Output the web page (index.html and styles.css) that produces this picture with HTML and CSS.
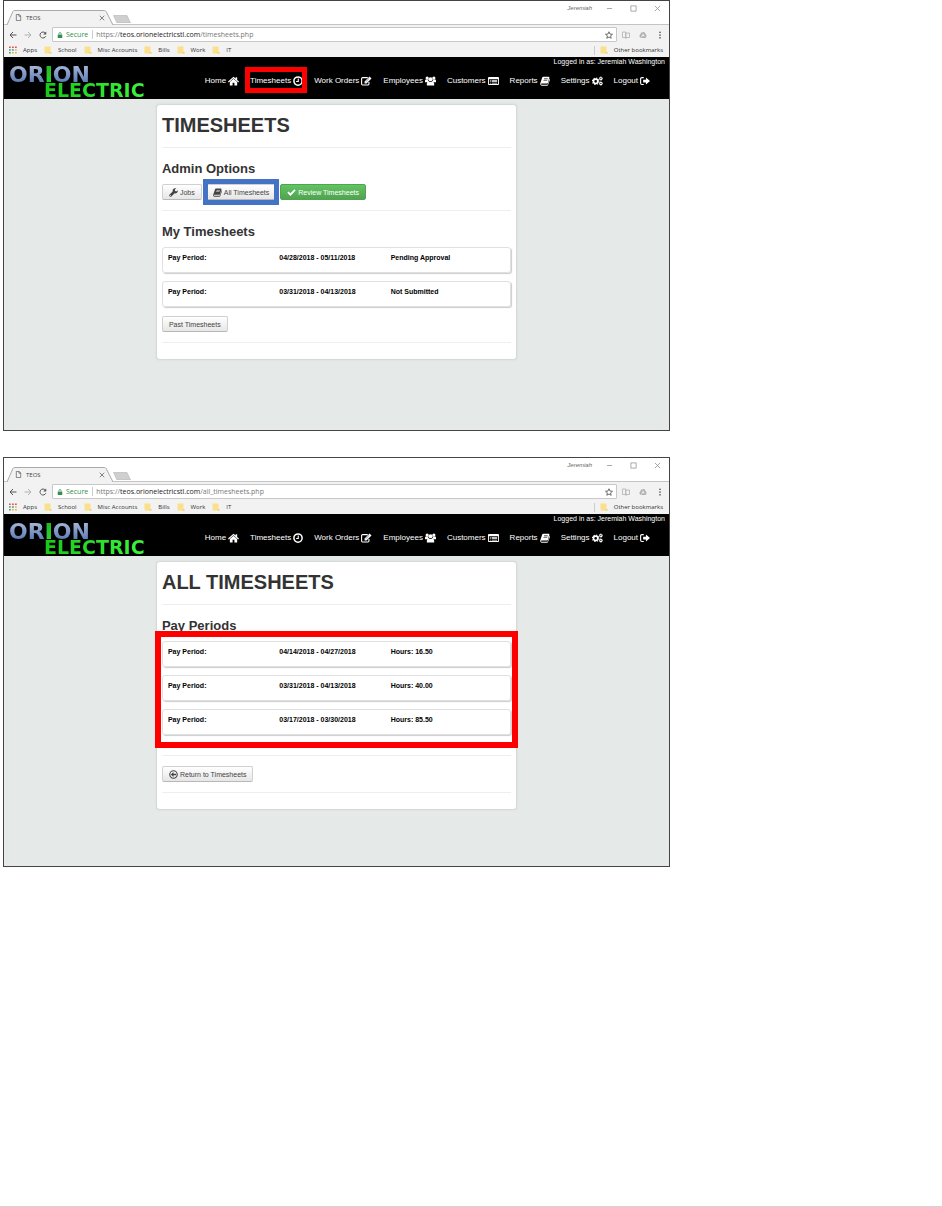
FILE: index.html
```html
<!DOCTYPE html>
<html lang="en">
<head>
<meta charset="utf-8">
<meta name="viewport" content="width=device-width, initial-scale=1">
<title>TEOS Timesheets</title>
<link rel="stylesheet" href="styles.css">
</head>
<body>
<svg class="sprite" aria-hidden="true">
  <symbol id="i-home" viewBox="0 0 18 16"><path d="M9 1 0 9l1.300 1.300L9 3.500l7.700 6.800L18 9l-3-2.700V2h-2.500v2z"/><path d="M9 4.300 3 9.600v5.900h4.500V11h3v4.500H15V9.600z"/></symbol>
  <symbol id="i-clock" viewBox="0 0 16 16"><circle cx="8" cy="8" r="6.600" fill="none" stroke="currentColor" stroke-width="2.400"/><path d="M7.500 4h1.800v5.500H5V7.800h2.500z"/></symbol>
  <symbol id="i-edit" viewBox="0 0 18 16"><path d="M13 9.500V13a1.500 1.500 0 0 1-1.500 1.500h-9A1.500 1.500 0 0 1 1 13V4a1.500 1.500 0 0 1 1.500-1.500H11" fill="none" stroke="currentColor" stroke-width="1.800"/><path d="M14 .8 17.200 4 9 12.200H5.800V9z"/><path d="m7.500 9.500 6-6" stroke="#000" stroke-width=".7"/></symbol>
  <symbol id="i-users" viewBox="0 0 18 16"><circle cx="3.500" cy="3.200" r="2.600"/><circle cx="14.500" cy="3.200" r="2.600"/><circle cx="9" cy="5.200" r="3.400"/><path d="M0 10V7.500Q0 5.500 1.500 5.500h3Q5 8 6.500 8.600L4 10zM18 10V7.500q0-2-1.500-2h-3Q13 8 11.500 8.600L14 10zM3 15.500V12Q3.500 9 6 8.800q3 1.500 6 0 2.500.2 3 3.200v3.500z"/></symbol>
  <symbol id="i-list" viewBox="0 0 18 16"><path fill-rule="evenodd" d="M1.500 1.500h15Q18 1.500 18 3v10q0 1.500-1.500 1.500h-15Q0 14.500 0 13V3q0-1.500 1.500-1.500zM1.500 5v8h15V5zM3 6.200h1.500v1.300H3zm3 0h9v1.300H6zM3 8.500h1.500v1.300H3zm3 0h9v1.300H6zm-3 2.300h1.500v1.300H3zm3 0h9v1.300H6z"/></symbol>
  <symbol id="i-book" viewBox="0 0 16 16"><path fill-rule="evenodd" d="M5 1h9q1.300.2 1 1.500L12.500 11q-.3 1-1.500 1H2.500q-1 .2-.8 1 .3.900 1.300.9h8.500q.7 0 1-.8L15.300 4q1 .6.600 1.800L13 14q-.4 1.300-1.700 1.500H2.500Q.3 15 .2 12.500L3.500 2.500Q4 1.200 5 1zm1.500 3-.3 1h6l.3-1zm-.8 2.300-.3 1h6l.3-1z"/></symbol>
  <symbol id="i-cogs" viewBox="0 0 18 16"><circle cx="6" cy="8.500" r="3.600" fill="none" stroke="currentColor" stroke-width="2.800"/><circle cx="6" cy="8.500" r="5.300" fill="none" stroke="currentColor" stroke-width="1.700" stroke-dasharray="2.080 2.080"/><circle cx="14.500" cy="4" r="1.900" fill="none" stroke="currentColor" stroke-width="1.700"/><circle cx="14.500" cy="4" r="2.900" fill="none" stroke="currentColor" stroke-width="1" stroke-dasharray="1.140 1.140"/><circle cx="14.500" cy="12" r="1.900" fill="none" stroke="currentColor" stroke-width="1.700"/><circle cx="14.500" cy="12" r="2.900" fill="none" stroke="currentColor" stroke-width="1" stroke-dasharray="1.140 1.140"/></symbol>
  <symbol id="i-logout" viewBox="0 0 16 16"><path d="M6 2.500H3Q1 2.500 1 4.500v7q0 2 2 2h3" fill="none" stroke="currentColor" stroke-width="1.800"/><path d="M9.500 2.500 16 8l-6.500 5.500v-3.300H5V5.800h4.500z"/></symbol>
  <symbol id="i-wrench" viewBox="0 0 16 16"><path fill-rule="evenodd" d="M15.500 4.200 12.800 6l-2.300-1.300V2.600L13 1Q9.500-.3 7.300 2 6 3.600 6.500 6L.8 11.800q-1 1.300 0 2.500l.9.900q1.200 1 2.500 0L10 9.500q2.500.6 4.200-1Q16 6.500 15.500 4.200zM2.800 12.300a.9.900 0 1 1 0 1.800.9.900 0 0 1 0-1.800z"/></symbol>
  <symbol id="i-check" viewBox="0 0 16 16"><path d="M.5 8.500 2.800 6 6 9.200 13.200 2l2.300 2.400L6 14z"/></symbol>
  <symbol id="i-back" viewBox="0 0 16 16"><circle cx="8" cy="8" r="6.600" fill="none" stroke="currentColor" stroke-width="2"/><path d="M3.200 8 8 3.500v3.200h4.500v2.600H8v3.200z"/></symbol>
  <symbol id="i-left" viewBox="0 0 16 16"><path d="M15 8H2m6-6L2 8l6 6" fill="none" stroke="currentColor" stroke-width="2"/></symbol>
  <symbol id="i-right" viewBox="0 0 16 16"><path d="M1 8h13M8 2l6 6-6 6" fill="none" stroke="currentColor" stroke-width="1.900"/></symbol>
  <symbol id="i-reload" viewBox="0 0 16 16"><path d="M13.500 10.500A6 6 0 1 1 12.500 4" fill="none" stroke="currentColor" stroke-width="2"/><path d="M14.500 1v6h-6z"/></symbol>
  <symbol id="i-lock" viewBox="0 0 16 16"><path d="M2 7h12v9H2z"/><path d="M5 7V4.500a3 3 0 0 1 6 0V7" fill="none" stroke="currentColor" stroke-width="2"/></symbol>
  <symbol id="i-page" viewBox="0 0 16 16"><path d="M3 1h6.500L13 4.500V15H3zM9 1v4h4" fill="none" stroke="currentColor" stroke-width="1.400"/></symbol>
  <symbol id="i-star" viewBox="0 0 16 16"><path d="m8 1.500 2 4.600 5 .4-3.800 3.200 1.200 4.800L8 12l-4.400 2.500 1.200-4.800L1 6.500l5-.4z" fill="none" stroke="currentColor" stroke-width="1.700"/></symbol>
  <symbol id="i-reader" viewBox="0 0 16 16"><path d="M1 2h6.500v11H1zm6.500 2H15v9H7.500zM7 15h2" fill="none" stroke="currentColor" stroke-width="1.600"/></symbol>
  <symbol id="i-drive" viewBox="0 0 16 16"><path d="m5.500 2-5 8 2.300 4L8 5.500zM6.500 2h4l5 8h-4.500zM6 10.500h9.500L13.300 14H4z"/></symbol>
  <symbol id="i-more" viewBox="0 0 16 16"><circle cx="8" cy="2.500" r="1.700"/><circle cx="8" cy="8" r="1.700"/><circle cx="8" cy="13.500" r="1.700"/></symbol>
  <symbol id="i-apps" viewBox="0 0 16 16"><path fill="#e0564b" d="M0 1h3.500v3H0zm6 0h3.500v3H6zm6 0h3.500v3H12z"/><path fill="#4a9b62" d="M0 6.500h3.500v3H0z"/><path fill="#4b7fd6" d="M6 6.500h3.500v3H6z"/><path fill="#e8b53b" d="M12 6.500h3.500v3H12zM6 12h3.500v3H6zm6 0h3.500v3H12z"/><path fill="#4a9b62" d="M0 12h3.500v3H0z"/></symbol>
  <symbol id="i-folder" viewBox="0 0 16 16"><path fill="#fbdf8a" d="M1 1h12v12l2 1v1H1z"/><path fill="#f0d070" d="M11 12h4v3h-4z"/></symbol>
  <symbol id="i-min" viewBox="0 0 16 16"><path d="M2 8h12" stroke="currentColor" stroke-width="1.600"/></symbol>
  <symbol id="i-max" viewBox="0 0 16 16"><path d="M2 2h12v12H2z" fill="none" stroke="currentColor" stroke-width="1.600"/></symbol>
  <symbol id="i-close" viewBox="0 0 16 16"><path d="m2 2 12 12M14 2 2 14" stroke="currentColor" stroke-width="1.700"/></symbol>
</svg>

<main class="doc">
  <section class="window">
    <div class="tabstrip">
      <div class="tab">
        <svg class="tab-shape" viewBox="0 0 108 15" preserveAspectRatio="none" aria-hidden="true"><path d="M0 15 6 1.500Q6.500.5 8 .5h91q1.500 0 2 1L108 15" fill="#f2f2f2" stroke="#a8a8a8"/></svg>
        <svg class="icon icon-s"><use href="#i-page"/></svg>
        <span class="tab-title">TEOS</span>
        <button class="plain" aria-label="Close tab"><svg class="icon icon-x"><use href="#i-close"/></svg></button>
      </div>
      <button class="plain newtab" aria-label="New tab"><svg viewBox="0 0 18 8"><path d="M.5.500h13.500l3.500 7.500H4z" fill="#cfcfcf" stroke="#b3b3b3" stroke-width=".6"/></svg></button>
      <span class="profile">Jeremiah</span>
      <div class="controls">
        <button class="plain" aria-label="Minimize"><svg class="icon icon-s"><use href="#i-min"/></svg></button>
        <button class="plain" aria-label="Maximize"><svg class="icon icon-s"><use href="#i-max"/></svg></button>
        <button class="plain" aria-label="Close"><svg class="icon icon-s"><use href="#i-close"/></svg></button>
      </div>
    </div>
    <div class="toolbar">
      <button class="plain" aria-label="Back"><svg class="icon"><use href="#i-left"/></svg></button>
      <button class="plain faint" aria-label="Forward"><svg class="icon"><use href="#i-right"/></svg></button>
      <button class="plain" aria-label="Reload"><svg class="icon"><use href="#i-reload"/></svg></button>
      <div class="omnibox">
        <span class="secure"><svg class="icon icon-x"><use href="#i-lock"/></svg>Secure</span>
        <span class="url">https://<b>teos.orionelectricstl.com</b>/timesheets.php</span>
        <button class="plain star" aria-label="Bookmark"><svg class="icon"><use href="#i-star"/></svg></button>
      </div>
      <div class="extensions">
        <button class="plain faint" aria-label="Reader"><svg class="icon"><use href="#i-reader"/></svg></button>
        <button class="plain faint" aria-label="Drive"><svg class="icon"><use href="#i-drive"/></svg></button>
        <button class="plain" aria-label="Menu"><svg class="icon"><use href="#i-more"/></svg></button>
      </div>
    </div>
    <div class="bookmarks">
      <a href="#"><svg class="icon"><use href="#i-apps"/></svg>Apps</a>
      <a href="#"><svg class="icon"><use href="#i-folder"/></svg>School</a>
      <a href="#"><svg class="icon"><use href="#i-folder"/></svg>Misc Accounts</a>
      <a href="#"><svg class="icon"><use href="#i-folder"/></svg>Bills</a>
      <a href="#"><svg class="icon"><use href="#i-folder"/></svg>Work</a>
      <a href="#"><svg class="icon"><use href="#i-folder"/></svg>IT</a>
      <a class="other" href="#"><svg class="icon"><use href="#i-folder"/></svg>Other bookmarks</a>
    </div>
    <header class="site-header">
      <a class="logo" href="#" aria-label="Orion Electric"><span class="logo-top">OR<i>I</i>ON</span><span class="logo-bottom">ELECTRIC</span></a>
      <div class="header-right">
        <div class="user">Logged in as: Jeremiah Washington</div>
        <nav class="nav">
          <a href="#">Home <svg class="icon icon-w"><use href="#i-home"/></svg></a>
          <a class="marked" href="#">Timesheets <svg class="icon icon-m"><use href="#i-clock"/></svg></a>
          <a href="#">Work Orders <svg class="icon icon-w"><use href="#i-edit"/></svg></a>
          <a href="#">Employees <svg class="icon icon-w"><use href="#i-users"/></svg></a>
          <a href="#">Customers <svg class="icon icon-w"><use href="#i-list"/></svg></a>
          <a href="#">Reports <svg class="icon icon-m"><use href="#i-book"/></svg></a>
          <a href="#">Settings <svg class="icon icon-w"><use href="#i-cogs"/></svg></a>
          <a href="#">Logout <svg class="icon icon-m"><use href="#i-logout"/></svg></a>
        </nav>
      </div>
    </header>
    <div class="site-body site-body-tall">
      <article class="card">
        <h1>TIMESHEETS</h1>
        <hr>
        <h2>Admin Options</h2>
        <div class="buttons">
          <button class="btn"><svg class="icon icon-m"><use href="#i-wrench"/></svg>Jobs</button>
          <span class="highlight"><button class="btn"><svg class="icon icon-m"><use href="#i-book"/></svg>All Timesheets</button></span>
          <button class="btn btn-success"><svg class="icon icon-m"><use href="#i-check"/></svg>Review Timesheets</button>
        </div>
        <hr>
        <h2>My Timesheets</h2>
        <div class="periods">
          <div class="period"><span>Pay Period:</span><span>04/28/2018 - 05/11/2018</span><span>Pending Approval</span></div>
          <div class="period"><span>Pay Period:</span><span>03/31/2018 - 04/13/2018</span><span>Not Submitted</span></div>
        </div>
        <div class="buttons buttons-after">
          <button class="btn">Past Timesheets</button>
        </div>
        <hr>
      </article>
    </div>
  </section>

  <section class="window">
    <div class="tabstrip">
      <div class="tab">
        <svg class="tab-shape" viewBox="0 0 108 15" preserveAspectRatio="none" aria-hidden="true"><path d="M0 15 6 1.500Q6.500.5 8 .5h91q1.500 0 2 1L108 15" fill="#f2f2f2" stroke="#a8a8a8"/></svg>
        <svg class="icon icon-s"><use href="#i-page"/></svg>
        <span class="tab-title">TEOS</span>
        <button class="plain" aria-label="Close tab"><svg class="icon icon-x"><use href="#i-close"/></svg></button>
      </div>
      <button class="plain newtab" aria-label="New tab"><svg viewBox="0 0 18 8"><path d="M.5.500h13.500l3.500 7.500H4z" fill="#cfcfcf" stroke="#b3b3b3" stroke-width=".6"/></svg></button>
      <span class="profile">Jeremiah</span>
      <div class="controls">
        <button class="plain" aria-label="Minimize"><svg class="icon icon-s"><use href="#i-min"/></svg></button>
        <button class="plain" aria-label="Maximize"><svg class="icon icon-s"><use href="#i-max"/></svg></button>
        <button class="plain" aria-label="Close"><svg class="icon icon-s"><use href="#i-close"/></svg></button>
      </div>
    </div>
    <div class="toolbar">
      <button class="plain" aria-label="Back"><svg class="icon"><use href="#i-left"/></svg></button>
      <button class="plain faint" aria-label="Forward"><svg class="icon"><use href="#i-right"/></svg></button>
      <button class="plain" aria-label="Reload"><svg class="icon"><use href="#i-reload"/></svg></button>
      <div class="omnibox">
        <span class="secure"><svg class="icon icon-x"><use href="#i-lock"/></svg>Secure</span>
        <span class="url">https://<b>teos.orionelectricstl.com</b>/all_timesheets.php</span>
        <button class="plain star" aria-label="Bookmark"><svg class="icon"><use href="#i-star"/></svg></button>
      </div>
      <div class="extensions">
        <button class="plain faint" aria-label="Reader"><svg class="icon"><use href="#i-reader"/></svg></button>
        <button class="plain faint" aria-label="Drive"><svg class="icon"><use href="#i-drive"/></svg></button>
        <button class="plain" aria-label="Menu"><svg class="icon"><use href="#i-more"/></svg></button>
      </div>
    </div>
    <div class="bookmarks">
      <a href="#"><svg class="icon"><use href="#i-apps"/></svg>Apps</a>
      <a href="#"><svg class="icon"><use href="#i-folder"/></svg>School</a>
      <a href="#"><svg class="icon"><use href="#i-folder"/></svg>Misc Accounts</a>
      <a href="#"><svg class="icon"><use href="#i-folder"/></svg>Bills</a>
      <a href="#"><svg class="icon"><use href="#i-folder"/></svg>Work</a>
      <a href="#"><svg class="icon"><use href="#i-folder"/></svg>IT</a>
      <a class="other" href="#"><svg class="icon"><use href="#i-folder"/></svg>Other bookmarks</a>
    </div>
    <header class="site-header">
      <a class="logo" href="#" aria-label="Orion Electric"><span class="logo-top">OR<i>I</i>ON</span><span class="logo-bottom">ELECTRIC</span></a>
      <div class="header-right">
        <div class="user">Logged in as: Jeremiah Washington</div>
        <nav class="nav">
          <a href="#">Home <svg class="icon icon-w"><use href="#i-home"/></svg></a>
          <a href="#">Timesheets <svg class="icon icon-m"><use href="#i-clock"/></svg></a>
          <a href="#">Work Orders <svg class="icon icon-w"><use href="#i-edit"/></svg></a>
          <a href="#">Employees <svg class="icon icon-w"><use href="#i-users"/></svg></a>
          <a href="#">Customers <svg class="icon icon-w"><use href="#i-list"/></svg></a>
          <a href="#">Reports <svg class="icon icon-m"><use href="#i-book"/></svg></a>
          <a href="#">Settings <svg class="icon icon-w"><use href="#i-cogs"/></svg></a>
          <a href="#">Logout <svg class="icon icon-m"><use href="#i-logout"/></svg></a>
        </nav>
      </div>
    </header>
    <div class="site-body">
      <article class="card">
        <h1>ALL TIMESHEETS</h1>
        <hr>
        <h2>Pay Periods</h2>
        <div class="periods periods-marked">
          <div class="period"><span>Pay Period:</span><span>04/14/2018 - 04/27/2018</span><span>Hours: 16.50</span></div>
          <div class="period"><span>Pay Period:</span><span>03/31/2018 - 04/13/2018</span><span>Hours: 40.00</span></div>
          <div class="period"><span>Pay Period:</span><span>03/17/2018 - 03/30/2018</span><span>Hours: 85.50</span></div>
        </div>
        <hr class="rule-spaced">
        <div class="buttons">
          <button class="btn"><svg class="icon icon-m"><use href="#i-back"/></svg>Return to Timesheets</button>
        </div>
        <hr>
      </article>
    </div>
  </section>
  <footer class="page-end"></footer>
</main>
</body>
</html>
```
FILE: styles.css
```css
* { box-sizing: border-box; }

body {
  margin: 0;
  background: #fff;
  color: #333;
  font-family: "Liberation Sans", Arial, sans-serif;
}

a { color: inherit; text-decoration: none; }

.sprite { display: none; }

.icon {
  display: block;
  flex: none;
  width: 8px;
  height: 8px;
  fill: currentColor;
}
.icon-x { width: 6px; height: 6px; }
.icon-s { width: 7px; height: 7px; }
.icon-m { width: 9px; height: 9px; }
.icon-w { width: 11px; height: 10px; }

.plain {
  display: block;
  padding: 0;
  border: 0;
  background: none;
  color: inherit;
}
.faint { color: #b0b0b0; }

.doc {
  display: flex;
  flex-direction: column;
  gap: 26px;
  min-height: 100vh;
}

.window {
  width: calc(100% - 6px);
  max-width: 667px;
  margin-left: 3px;
  border: 1px solid #444;
  background: #fff;
}

/* Browser chrome */
.tabstrip {
  display: flex;
  align-items: flex-end;
  height: 24px;
  padding: 0 8px 0 3px;
  border-bottom: 1px solid #c4c4c4;
  font-family: "Open Sans", "Noto Sans", sans-serif;
  font-size: 6px;
  color: #444;
}
.tab {
  position: relative;
  display: flex;
  align-items: center;
  width: 106px;
  height: 15px;
  margin-bottom: -1px;
  padding: 0 8px 0 8px;
}
.tab > * { position: relative; }
.tab > .tab-shape {
  position: absolute;
  inset: 0;
  width: 100%;
  height: 100%;
}
.tab-title { flex: 1; margin-left: 4px; }
.newtab { width: 18px; height: 8px; margin: 0 auto 1px 0; }
.newtab svg { display: block; width: 100%; height: 100%; }
.profile {
  align-self: flex-start;
  margin: 3px 14px 0 0;
  color: #666;
  font-family: "Liberation Sans", Arial, sans-serif;
  font-style: italic;
  line-height: 9px;
}
.controls {
  display: flex;
  align-self: flex-start;
  gap: 17px;
  margin-top: 4px;
  color: #888;
}

.toolbar {
  display: flex;
  align-items: center;
  gap: 7px;
  padding: 2px 5px 1px 5px;
  background: #f2f2f2;
  color: #555;
}
.omnibox {
  display: flex;
  flex: 1;
  align-items: center;
  height: 15px;
  margin: 0 -2px;
  padding: 0 3px 0 4px;
  border: 1px solid #c8c8c8;
  border-radius: 1px;
  background: #fff;
  font-family: "Open Sans", "Noto Sans", sans-serif;
  font-size: 7px;
  line-height: 9px;
}
.secure {
  display: flex;
  align-items: center;
  gap: 3px;
  padding-right: 4px;
  border-right: 1px solid #ccc;
  color: #2f8f4e;
}
.url { padding-left: 3px; color: #777; }
.url b { font-weight: normal; color: #222; }
.star { margin-left: auto; }
.extensions { display: flex; gap: 9px; }

.bookmarks {
  display: flex;
  align-items: center;
  gap: 7px;
  height: 14px;
  padding: 0 6px 0 5px;
  background: #f2f2f2;
  color: #333;
  font-family: "Open Sans", "Noto Sans", sans-serif;
  font-size: 6px;
  line-height: 9px;
}
.bookmarks a { display: flex; align-items: center; gap: 6px; }
.bookmarks .other {
  margin-left: auto;
  padding-left: 5px;
  border-left: 1px solid #ccc;
}

/* Site header */
.site-header {
  display: flex;
  justify-content: space-between;
  height: 42px;
  background: #000;
  color: #fff;
  font-size: 8px;
}
.logo {
  display: flex;
  flex-direction: column;
  margin: 9px 0 0 5px;
  font-family: "DejaVu Sans", sans-serif;
  font-weight: bold;
}
.logo span {
  background-clip: text;
  -webkit-background-clip: text;
  color: transparent;
}
.logo-top {
  background-image: linear-gradient(#a3b4d6, #5b7ab4);
  font-size: 22px;
  line-height: 17px;
}
.logo-top i {
  background: linear-gradient(#17b317, #2be02b);
  background-clip: text;
  -webkit-background-clip: text;
  font-style: normal;
}
.logo-bottom {
  margin-left: 35px;
  background-image: linear-gradient(90deg, #18c818, #3cf53c);
  font-size: 19px;
  line-height: 14px;
}
.header-right {
  display: flex;
  flex-direction: column;
  align-items: flex-end;
}
.user {
  padding-right: 4px;
  font-size: 7px;
  line-height: 9px;
}
.nav {
  display: flex;
  gap: 11px;
  margin-top: 9px;
  padding-right: 19px;
  line-height: 12px;
}
.nav a { position: relative; display: flex; align-items: center; gap: 2px; }
.nav .icon-m { width: 10px; height: 10px; }
.marked::after {
  content: "";
  position: absolute;
  inset: -8px -4px -6px -5px;
  border: 5px solid #f00;
}

/* Site body */
.site-body {
  padding: 6px 0 57px;
  background: #e5e9e8;
}
.site-body-tall { padding-bottom: 71px; }
.card {
  width: 54%;
  margin: 0 auto;
  padding: 8px 5px 3px;
  border-radius: 3px;
  background: #fff;
  box-shadow: 0 0 2px 1px #d0d4d3;
}
h1, h2 { margin: 0; font-weight: bold; }
h1 { font-size: 20px; line-height: 24px; }
h2 { margin-bottom: 7px; font-size: 13px; line-height: 16px; }
hr {
  margin: 10px 0 13px;
  border: 0;
  border-top: 1px solid #eee;
}

.buttons { display: flex; gap: 4px; }
.buttons-after { margin-top: 9px; }
.btn {
  display: flex;
  align-items: center;
  gap: 2px;
  height: 16px;
  padding: 0 6px;
  border: 1px solid #d0d0d0;
  border-bottom-color: #b8b8b8;
  border-radius: 2px;
  background: linear-gradient(#fff, #e6e6e6);
  color: #444;
  font-family: inherit;
  font-size: 7px;
}
.btn-success {
  border-color: #51a351;
  background: linear-gradient(#62c462, #51a351);
  color: #fff;
}
.highlight { position: relative; }
.highlight::after {
  content: "";
  position: absolute;
  inset: -5px -3px;
  border: 5px solid #4472c4;
}

.periods { position: relative; display: grid; gap: 8px; }
.periods-marked::after {
  content: "";
  position: absolute;
  inset: -10px -7px -13px;
  border: 6px solid #f00;
}
.period {
  display: grid;
  grid-template-columns: repeat(3, 1fr);
  height: 26px;
  padding: 5px 8px 0 5px;
  border: 1px solid #e0e0e0;
  border-radius: 3px;
  box-shadow: 1px 1px 1px #ccc;
  color: #000;
  font-size: 7px;
  font-weight: bold;
  line-height: 9px;
}
.rule-spaced { margin: 20px 0 10px; }

.page-end { margin-top: auto; border-top: 1px solid #d4d4d4; }
```
